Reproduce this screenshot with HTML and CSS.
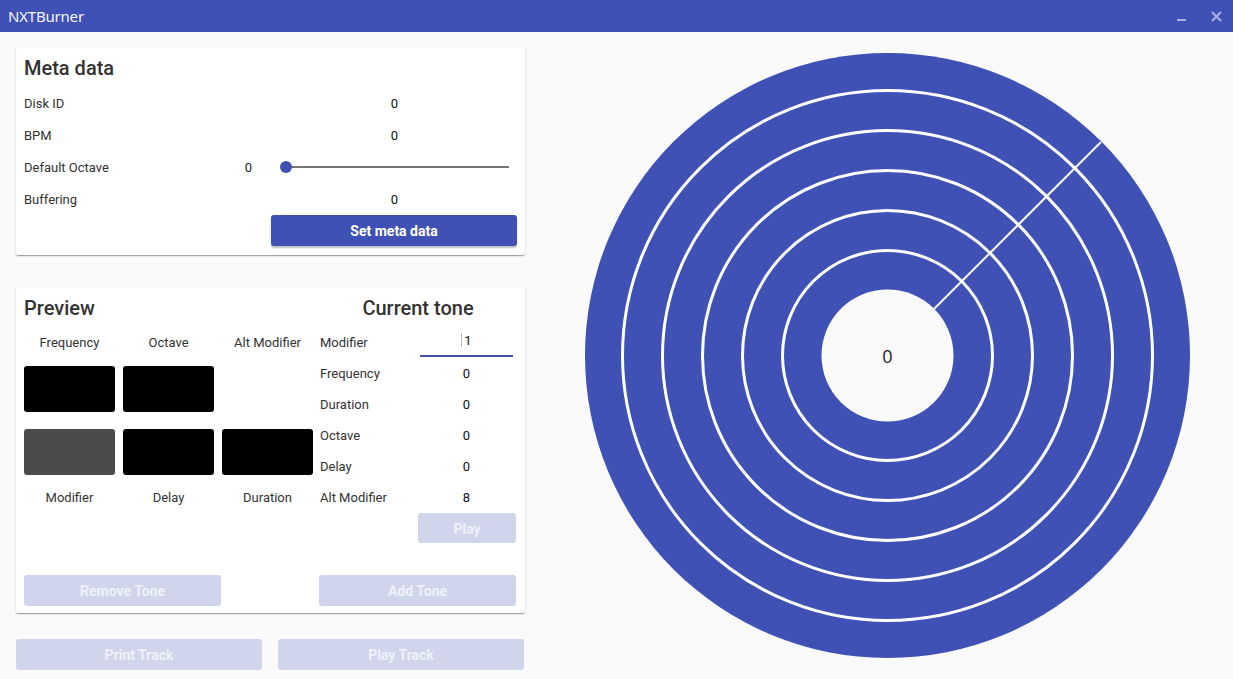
FILE: index.html
```html
<!DOCTYPE html>
<html>
<head>
<meta charset="utf-8">
<title>NXTBurner</title>
<link rel="stylesheet" href="styles.css">
</head>
<body>
<header class="titlebar">
  <span class="app-title">NXTBurner</span>
  <div class="win-controls">
    <span class="win-btn"><svg width="10" height="10" viewBox="0 0 10 10"><rect x="0" y="8" width="9" height="2.4" fill="#aab3e2"/></svg></span>
    <span class="win-btn"><svg width="11" height="11" viewBox="0 0 11 11"><path d="M1 1 L10 10 M10 1 L1 10" stroke="#aab3e2" stroke-width="2"/></svg></span>
  </div>
</header>
<main class="main">
  <section class="left">
    <div class="card meta">
      <h2 class="card-title">Meta data</h2>
      <div class="meta-grid">
        <div class="lbl">Disk ID</div><div class="val">0</div>
        <div class="lbl">BPM</div><div class="val">0</div>
        <div class="lbl split"><span>Default Octave</span><span class="oct-val">0</span></div>
        <div class="slider"><span class="track"></span><span class="thumb"></span></div>
        <div class="lbl">Buffering</div><div class="val">0</div>
        <div></div><button class="btn primary">Set meta data</button>
      </div>
    </div>

    <div class="card preview">
      <div class="preview-body">
        <div class="preview-left">
          <h2 class="card-title">Preview</h2>
          <div class="pv-grid">
            <div class="pv-lbl">Frequency</div>
            <div class="pv-lbl">Octave</div>
            <div class="pv-lbl">Alt Modifier</div>
            <div class="box black"></div>
            <div class="box black"></div>
            <div class="box empty"></div>
            <div class="box gray row2"></div>
            <div class="box black row2"></div>
            <div class="box black row2"></div>
            <div class="pv-lbl bottom">Modifier</div>
            <div class="pv-lbl bottom">Delay</div>
            <div class="pv-lbl bottom">Duration</div>
          </div>
        </div>
        <div class="preview-right">
          <h2 class="card-title center">Current tone</h2>
          <div class="tone-grid">
            <div class="t-lbl">Modifier</div><div class="t-val input"><span class="caret"></span>1</div>
            <div class="t-lbl">Frequency</div><div class="t-val">0</div>
            <div class="t-lbl">Duration</div><div class="t-val">0</div>
            <div class="t-lbl">Octave</div><div class="t-val">0</div>
            <div class="t-lbl">Delay</div><div class="t-val">0</div>
            <div class="t-lbl">Alt Modifier</div><div class="t-val">8</div>
          </div>
          <div class="play-row"><button class="btn disabled play">Play</button></div>
        </div>
      </div>
      <div class="tone-actions">
        <button class="btn disabled tone-btn">Remove Tone</button>
        <button class="btn disabled tone-btn">Add Tone</button>
      </div>
    </div>

    <div class="track-actions">
      <button class="btn disabled track-btn">Print Track</button>
      <button class="btn disabled track-btn">Play Track</button>
    </div>
  </section>

  <section class="right">
    <svg class="disc" width="605" height="605" viewBox="0 0 605 605">
      <circle cx="302.5" cy="302.5" r="302.5" fill="#3f51b5"/>
      <g fill="none" stroke="#ffffff" stroke-width="3">
        <circle cx="302.5" cy="302.5" r="265"/>
        <circle cx="302.5" cy="302.5" r="225"/>
        <circle cx="302.5" cy="302.5" r="185"/>
        <circle cx="302.5" cy="302.5" r="145"/>
        <circle cx="302.5" cy="302.5" r="105"/>
      </g>
      <line x1="349" y1="256" x2="516" y2="89" stroke="#ffffff" stroke-width="2"/>
      <circle cx="302.5" cy="302.5" r="66" fill="#fafafa"/>
      <text x="302.5" y="303" class="disc-num" text-anchor="middle" dominant-baseline="central">0</text>
    </svg>
  </section>
</main>
</body>
</html>
```

FILE: styles.css
```css
* { box-sizing: border-box; }
html, body { margin: 0; padding: 0; }
body {
  width: 1233px;
  height: 679px;
  overflow: hidden;
  background: #fafafa;
  font-family: Roboto, "Liberation Sans", sans-serif;
  font-size: 13px;
  color: #333;
}
.titlebar {
  height: 32px;
  background: #3f51b5;
  display: flex;
  align-items: center;
  justify-content: space-between;
  padding-left: 8px;
}
.app-title {
  font-family: "Noto Sans", "Open Sans", sans-serif;
  font-size: 15px;
  color: #f4f4fb;
  letter-spacing: -0.2px;
}
.win-controls { display: flex; height: 32px; }
.win-btn {
  width: 34px;
  height: 32px;
  display: flex;
  align-items: center;
  justify-content: center;
}
.main {
  display: flex;
  height: 647px;
}
.left {
  width: 541px;
  padding: 16px 16px 0 16px;
}
.right {
  flex: 1;
  display: flex;
  align-items: center;
  justify-content: center;
}
.card {
  background: #fff;
  border-radius: 2px;
  box-shadow: 0 2px 1px -1px rgba(0,0,0,.2), 0 1px 1px 0 rgba(0,0,0,.14), 0 1px 3px 0 rgba(0,0,0,.12);
}
.card-title {
  margin: 0;
  height: 39px;
  line-height: 40px;
  font-size: 20px;
  font-weight: 500;
  color: #333;
}
.card-title.center { text-align: center; }
.meta { padding: 0 8px 8px 8px; }
.meta-grid {
  display: grid;
  grid-template-columns: 247px 246px;
  grid-auto-rows: 32px;
  align-items: center;
}
.lbl { color: #333; }
.lbl.split { display: flex; justify-content: space-between; padding-right: 19px; }
.oct-val { color: #222; }
.val { text-align: center; color: #111; padding-left: 1px; }
.slider {
  position: relative;
  height: 32px;
  margin: 0 8px 0 9px;
}
.track {
  position: absolute;
  left: 6px;
  right: 0;
  top: 15px;
  height: 2px;
  background: #757575;
}
.thumb {
  position: absolute;
  left: 0;
  top: 10px;
  width: 12px;
  height: 12px;
  border-radius: 50%;
  background: #3f51b5;
}
.btn {
  border: none;
  border-radius: 3px;
  font-family: Roboto, "Liberation Sans", sans-serif;
  font-size: 14px;
  font-weight: 700;
  height: 31px;
  padding: 1px 0 0 0;
}
.btn.primary {
  align-self: start;
  background: #3f51b5;
  color: #fff;
  width: 246px;
  box-shadow: 0 2px 2px rgba(0,0,0,.25);
}
.btn.disabled {
  background: #d1d5ec;
  color: #eff1f9;
}
.preview {
  margin-top: 33px;
  padding: 0 8px 7px 8px;
}
.preview-body {
  display: grid;
  grid-template-columns: 289px 198px;
  column-gap: 6px;
}
.pv-grid {
  display: grid;
  grid-template-columns: repeat(3, 91px);
  column-gap: 8px;
}
.pv-lbl {
  height: 31px;
  line-height: 31px;
  text-align: center;
  color: #333;
}
.pv-lbl.bottom { margin-top: 7px; }
.box {
  height: 46px;
  border-radius: 3px;
  margin-top: 8px;
}
.box.row2 { margin-top: 17px; }
.box.black { background: #000; }
.box.gray { background: #4b4b4b; }
.tone-grid {
  display: grid;
  grid-template-columns: 101px 93px;
  grid-auto-rows: 31px;
  align-items: center;
}
.t-lbl { padding-left: 1px; color: #333; }
.t-val { text-align: center; color: #111; }
.t-val.input {
  height: 31px;
  line-height: 30px;
  border-bottom: 2px solid #3f51b5;
  margin-top: -2px;
}
.caret {
  display: inline-block;
  width: 1px;
  height: 14px;
  background: #bbb;
  vertical-align: -2px;
  margin-right: 2px;
}
.play-row { display: flex; justify-content: flex-end; padding-right: 1px; }
.btn.play { width: 98px; height: 30px; }
.tone-actions {
  display: flex;
  justify-content: space-between;
  margin-top: 32px;
  padding-right: 1px;
}
.tone-btn { width: 197px; }
.track-actions {
  display: flex;
  gap: 16px;
  margin-top: 26px;
}
.track-btn { width: 246px; }
.disc { display: block; }
.disc-num {
  font-family: "Open Sans", "Noto Sans", sans-serif;
  font-size: 18px;
  font-weight: 500;
  fill: #222;
}
```
